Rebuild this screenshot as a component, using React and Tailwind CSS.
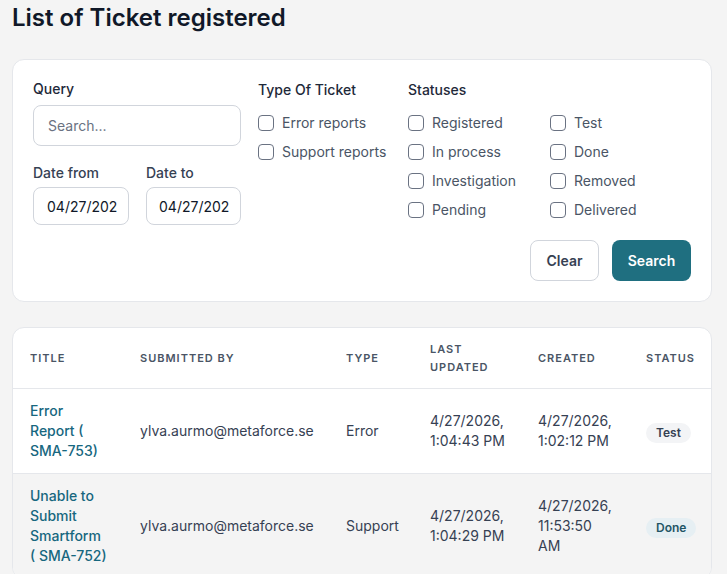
import React from 'react';

const typeOptions = ['Error reports', 'Support reports'];
const statusOptions = [
  'Registered', 'Test',
  'In process', 'Done',
  'Investigation', 'Removed',
  'Pending', 'Delivered',
];

const tickets = [
  {
    title: 'Error Report ( SMA-753)',
    by: 'ylva.aurmo@metaforce.se',
    type: 'Error',
    updated: '4/27/2026, 1:04:43 PM',
    created: '4/27/2026, 1:02:12 PM',
    status: 'Test',
  },
  {
    title: 'Unable to Submit Smartform ( SMA-752)',
    by: 'ylva.aurmo@metaforce.se',
    type: 'Support',
    updated: '4/27/2026, 1:04:29 PM',
    created: '4/27/2026, 11:53:50 AM',
    status: 'Done',
  },
];

function Check({ label }) {
  return (
    <label className="flex items-center gap-2 h-5 text-sm text-gray-600">
      <span className="w-4 h-4 rounded-[4px] border border-gray-500 bg-white shrink-0" />
      <span>{label}</span>
    </label>
  );
}

function StatusBadge({ status }) {
  if (status === 'Done') {
    return <span className="inline-block px-2.5 py-0.5 rounded-full text-xs font-semibold bg-[#e6eff3] text-[#1f5566]">{status}</span>;
  }
  return <span className="inline-block px-2.5 py-0.5 rounded-full text-xs font-semibold bg-gray-100 text-gray-700">{status}</span>;
}

export default function App() {
  return (
    <div className="min-h-screen bg-[#f4f4f4] font-['Inter',sans-serif] pl-3 pt-[2px]">
      <h1 className="text-2xl leading-8 font-semibold text-gray-900">List of Ticket registered</h1>

      <div className="w-[700px] mt-[25px] bg-white border border-gray-200 rounded-xl px-5 pt-[19px] pb-5">
        <div className="flex gap-[17px]">
          <div className="w-[208px] shrink-0">
            <div className="text-sm font-medium text-gray-800 leading-5">Query</div>
            <input
              type="text"
              placeholder="Search..."
              className="mt-1.5 w-full h-[41px] rounded-lg border border-gray-300 px-[14px] text-sm text-gray-900 placeholder:text-gray-500 outline-none"
            />
            <div className="flex gap-[17px] mt-[17px]">
              <div className="w-[96px]">
                <div className="text-sm font-medium text-gray-700 leading-5">Date from</div>
                <input readOnly value="04/27/202" className="mt-1 w-full h-[38px] rounded-lg border border-gray-300 pl-[13px] pr-1 text-sm text-gray-900 outline-none" />
              </div>
              <div className="w-[95px]">
                <div className="text-sm font-medium text-gray-700 leading-5">Date to</div>
                <input readOnly value="04/27/202" className="mt-1 w-full h-[38px] rounded-lg border border-gray-300 pl-[12px] pr-1 text-sm text-gray-900 outline-none" />
              </div>
            </div>
          </div>

          <div className="w-[133px] shrink-0 pt-px">
            <div className="text-sm font-medium text-gray-800 leading-5">Type Of Ticket</div>
            <div className="mt-[13px] flex flex-col gap-[9px]">
              {typeOptions.map((t) => <Check key={t} label={t} />)}
            </div>
          </div>

          <div className="flex-1 pt-px">
            <div className="text-sm font-medium text-gray-800 leading-5">Statuses</div>
            <div className="mt-[13px] grid grid-cols-[142px_1fr] gap-y-[9px]">
              {statusOptions.map((s) => <Check key={s} label={s} />)}
            </div>
          </div>
        </div>

        <div className="flex justify-end gap-[13px] mt-[15px]">
          <button className="h-[41px] w-[69px] rounded-lg border border-gray-300 bg-white text-sm font-semibold text-gray-700">Clear</button>
          <button className="h-[41px] w-[79px] rounded-lg bg-[#1f6f80] text-sm font-semibold text-white">Search</button>
        </div>
      </div>

      <div className="w-[700px] mt-[25px] bg-white border border-gray-200 rounded-xl overflow-hidden">
        <table className="w-full table-fixed border-collapse">
          <colgroup>
            <col className="w-[110px]" />
            <col className="w-[206px]" />
            <col className="w-[84px]" />
            <col className="w-[108px]" />
            <col className="w-[108px]" />
            <col />
          </colgroup>
          <thead>
            <tr className="border-b border-gray-200">
              {['Title', 'Submitted by', 'Type', 'Last updated', 'Created', 'Status'].map((h) => (
                <th key={h} className="pl-[17px] pr-[15px] py-3 text-left align-middle text-[11px] leading-[18px] font-semibold uppercase tracking-[0.09em] text-gray-600">
                  {h}
                </th>
              ))}
            </tr>
          </thead>
          <tbody>
            {tickets.map((t, i) => (
              <tr key={i} className={i === 1 ? 'bg-[#f4f4f4]' : 'bg-white border-b border-gray-200'}>
                <td className="pl-[17px] pr-[15px] py-3 text-sm leading-5 text-[#17677f] font-medium">{t.title}</td>
                <td className="pl-[17px] pr-[15px] py-3 text-sm leading-5 text-gray-700">{t.by}</td>
                <td className="pl-[17px] pr-[15px] py-3 text-sm leading-5 text-gray-700">{t.type}</td>
                <td className="pl-[17px] pr-[15px] py-3 text-sm leading-5 text-gray-700">{t.updated}</td>
                <td className="pl-[17px] pr-[15px] py-3 text-sm leading-5 text-gray-700">{t.created}</td>
                <td className="pl-[17px] pr-[15px] py-3"><StatusBadge status={t.status} /></td>
              </tr>
            ))}
          </tbody>
        </table>
      </div>
    </div>
  );
}
